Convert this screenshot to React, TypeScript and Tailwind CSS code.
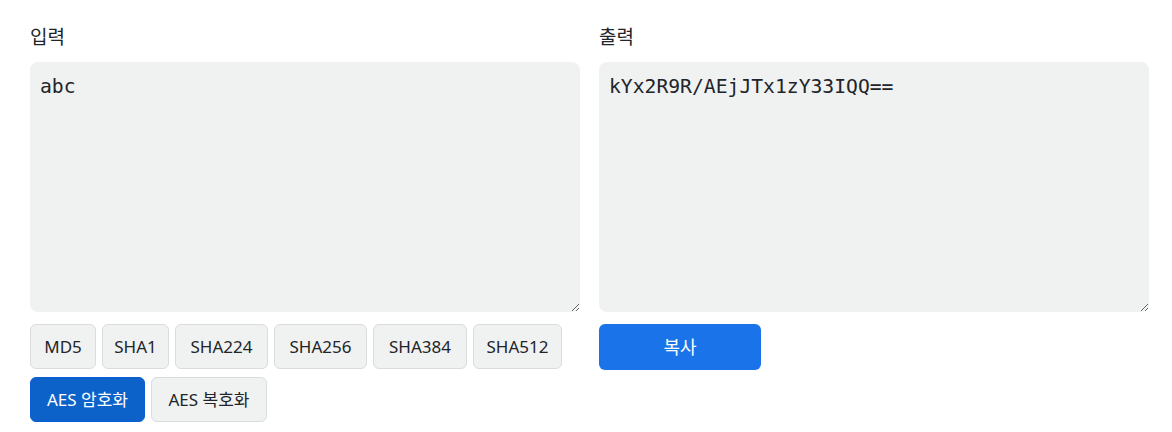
import React from "react";

const btn =
  "h-[45px] rounded-[6px] border border-[#dadcdd] bg-[#f0f1f1] text-[17px] text-[#212529] text-center";

const hashes: [string, string][] = [
  ["MD5", "w-[66px]"],
  ["SHA1", "w-[67px]"],
  ["SHA224", "w-[93px]"],
  ["SHA256", "w-[93px]"],
  ["SHA384", "w-[94px]"],
  ["SHA512", "w-[89px]"],
];

export default function App() {
  const font = { fontFamily: '"Noto Sans", "Noto Sans CJK KR", sans-serif' };
  return (
    <div className="w-[1172px] h-[432px] bg-white px-[30px] pt-[22px]" style={font}>
      <div className="grid grid-cols-2 gap-x-[19px] w-[1119px]">
        <div className="flex flex-col">
          <div className="text-[19px] leading-[30px] text-[#212529] mb-[10px]">입력</div>
          <textarea
            defaultValue="abc"
            className="h-[250px] w-full rounded-[8px] bg-[#f0f1f1] px-[10px] py-[10px] leading-[30px] text-[#212529] outline-none"
            style={{ fontFamily: '"DejaVu Sans Mono", monospace', fontSize: 19.7 }}
          />
          <div className="flex flex-wrap gap-x-[6px] gap-y-[8px] mt-[12px] w-[540px]">
            {hashes.map(([t, w]) => (
              <button key={t} className={`${btn} ${w}`}>{t}</button>
            ))}
            <button className="h-[45px] w-[115px] rounded-[6px] border border-[#0b5ed7] bg-[#0d62c9] text-[17px] text-white">
              AES 암호화
            </button>
            <button className={`${btn} w-[116px]`}>AES 복호화</button>
          </div>
        </div>
        <div className="flex flex-col">
          <div className="text-[19px] leading-[30px] text-[#212529] mb-[10px]">출력</div>
          <textarea
            readOnly
            defaultValue="kYx2R9R/AEjJTx1zY33IQQ=="
            className="h-[250px] w-full rounded-[8px] bg-[#f0f1f1] px-[10px] py-[10px] leading-[30px] text-[#212529] outline-none"
            style={{ fontFamily: '"DejaVu Sans Mono", monospace', fontSize: 19.7 }}
          />
          <div className="mt-[12px]">
            <button className="h-[46px] w-[162px] rounded-[6px] bg-[#1a73e8] text-[18px] text-white">
              복사
            </button>
          </div>
        </div>
      </div>
    </div>
  );
}
